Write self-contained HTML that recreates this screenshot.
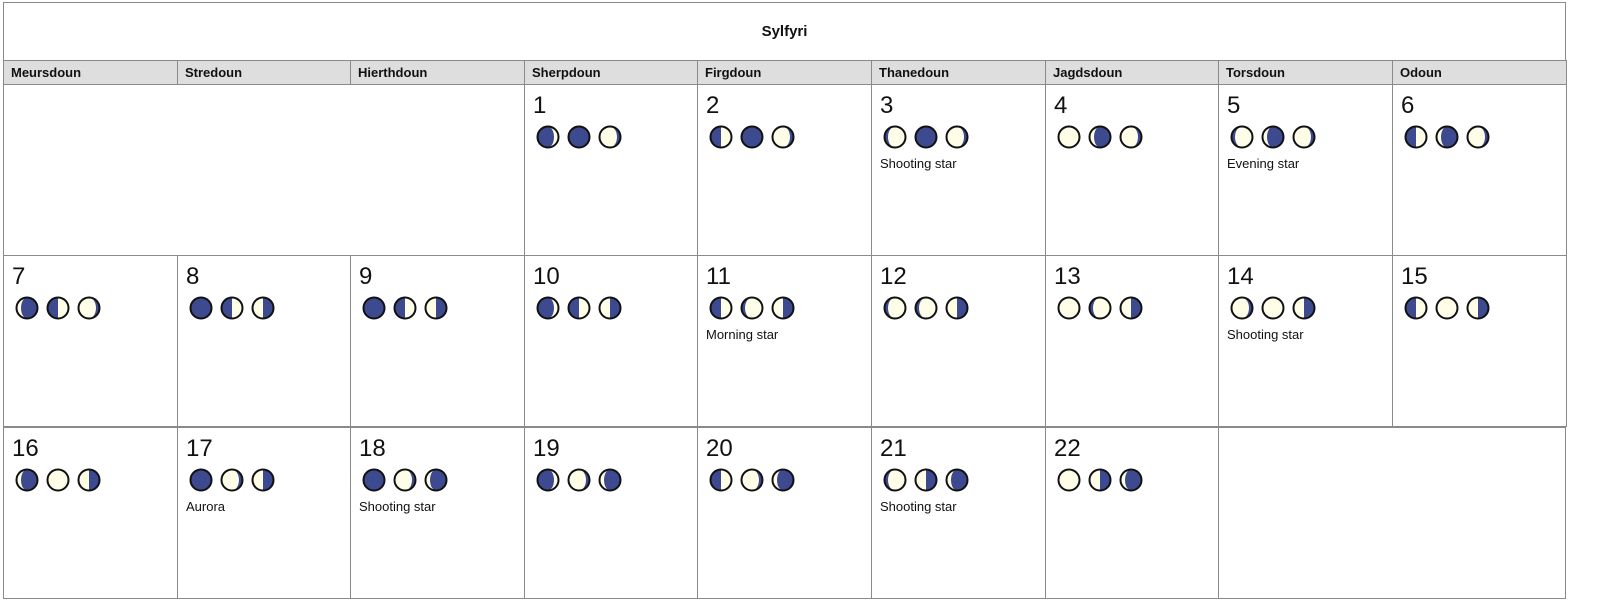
<!DOCTYPE html>
<html><head><meta charset="utf-8"><style>
body{margin:0;background:#fff;width:1599px;height:612px;position:relative;font-family:"Liberation Sans",sans-serif;color:#111}
.c{position:absolute;box-sizing:border-box;border:1px solid #8a8a8a}
.t{left:3px;top:2px;width:1563px;height:59px;display:flex;align-items:center;justify-content:center;font-weight:bold;font-size:15px}
.h{height:25px;top:60px;background:#dedede;font-weight:bold;font-size:13px;padding:4px 0 0 7px}
.d{height:172px}
.n{position:absolute;left:8px;top:8px;font-size:24px;line-height:26px}
.m{position:absolute;left:11px;top:40px;display:flex;gap:7px}
.m svg{width:24px;height:24px}
.cap{position:absolute;left:8px;top:71px;font-size:13px}
</style></head><body>
<svg width="0" height="0" style="position:absolute"><defs>
<g id="L"><circle cx="12" cy="12" r="10.5" fill="#fdfde8" stroke="#111" stroke-width="2"/></g>
<g id="D"><circle cx="12" cy="12" r="10.5" fill="#3d4a8f" stroke="#111" stroke-width="2"/></g>
<g id="hl"><circle cx="12" cy="12" r="10.5" fill="#fdfde8"/><path d="M12 1.5A10.5 10.5 0 0 0 12 22.5Z" fill="#3d4a8f"/><circle cx="12" cy="12" r="10.5" fill="none" stroke="#111" stroke-width="2"/></g>
<g id="hr"><circle cx="12" cy="12" r="10.5" fill="#fdfde8"/><path d="M12 1.5A10.5 10.5 0 0 1 12 22.5Z" fill="#3d4a8f"/><circle cx="12" cy="12" r="10.5" fill="none" stroke="#111" stroke-width="2"/></g>
<g id="gl"><circle cx="12" cy="12" r="10.5" fill="#fdfde8"/><path d="M12 1.5A10.5 10.5 0 0 0 12 22.5A6 10.5 0 0 0 12 1.5Z" fill="#3d4a8f"/><circle cx="12" cy="12" r="10.5" fill="none" stroke="#111" stroke-width="2"/></g>
<g id="gr"><circle cx="12" cy="12" r="10.5" fill="#fdfde8"/><path d="M12 1.5A10.5 10.5 0 0 1 12 22.5A6 10.5 0 0 1 12 1.5Z" fill="#3d4a8f"/><circle cx="12" cy="12" r="10.5" fill="none" stroke="#111" stroke-width="2"/></g>
<g id="cl"><circle cx="12" cy="12" r="10.5" fill="#fdfde8"/><path d="M12 1.5A10.5 10.5 0 0 0 12 22.5A7 10.5 0 0 1 12 1.5Z" fill="#3d4a8f"/><circle cx="12" cy="12" r="10.5" fill="none" stroke="#111" stroke-width="2"/></g>
<g id="cr"><circle cx="12" cy="12" r="10.5" fill="#fdfde8"/><path d="M12 1.5A10.5 10.5 0 0 1 12 22.5A7 10.5 0 0 0 12 1.5Z" fill="#3d4a8f"/><circle cx="12" cy="12" r="10.5" fill="none" stroke="#111" stroke-width="2"/></g>
</defs></svg>
<div class="c t">Sylfyri</div>
<div id="root"></div>
<script>
var X=[3,177,350,524,697,871,1045,1218,1392,1566];
var names=["Meursdoun","Stredoun","Hierthdoun","Sherpdoun","Firgdoun","Thanedoun","Jagdsdoun","Torsdoun","Odoun"];
var days={1:["gl","D","cr"],2:["hl","D","cr"],3:["cl","D","cr"],4:["L","gr","cr"],5:["cl","gr","cr"],6:["hl","gr","cr"],
7:["gr","hl","cr"],8:["D","hl","hr"],9:["D","hl","hr"],10:["gl","hl","hr"],11:["hl","cl","hr"],12:["cl","cl","hr"],13:["L","cl","hr"],14:["cr","L","hr"],15:["hl","L","hr"],
16:["gr","L","hr"],17:["D","cr","hr"],18:["D","cr","gr"],19:["gl","cr","gr"],20:["hl","cr","gr"],21:["cl","hr","gr"],22:["L","hr","gr"]};
var caps={3:"Shooting star",5:"Evening star",11:"Morning star",14:"Shooting star",17:"Aurora",18:"Shooting star",21:"Shooting star"};
var h="";
for(var i=0;i<9;i++)h+='<div class="c h" style="left:'+X[i]+'px;width:'+(X[i+1]-X[i]+1)+'px">'+names[i]+'</div>';
var T=[84,255,427,599];
h+='<div class="c d" style="left:3px;top:84px;width:522px"></div>';
h+='<div class="c d" style="left:1218px;top:427px;width:348px"></div>';
for(var d=1;d<=22;d++){var p=d+2,r=Math.floor(p/9),col=p%9;
var s='<div class="c d" style="left:'+X[col]+'px;top:'+T[r]+'px;width:'+(X[col+1]-X[col]+1)+'px"><div class="n">'+d+'</div><div class="m">';
days[d].forEach(function(k){s+='<svg viewBox="0 0 24 24"><use href="#'+k+'"/></svg>'});
s+='</div>'+(caps[d]?'<div class="cap">'+caps[d]+'</div>':'')+'</div>';h+=s;}
document.getElementById("root").innerHTML=h;
</script>
</body></html>
